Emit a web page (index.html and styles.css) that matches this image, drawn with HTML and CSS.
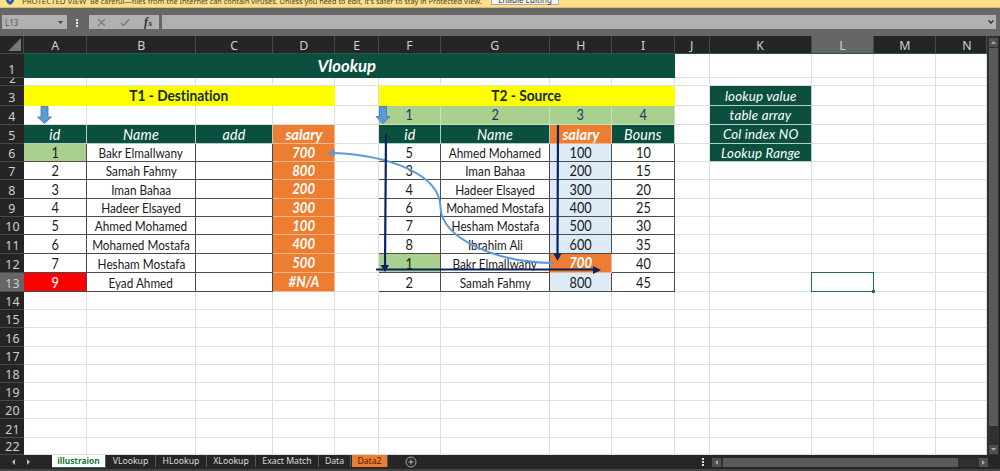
FILE: index.html
```html
<!DOCTYPE html>
<html lang="en">
<head>
<meta charset="utf-8">
<title>Vlookup</title>
<link rel="stylesheet" href="styles.css">
</head>
<body>
<div class="app">
  <div class="notice">
    <svg class="shield" width="10" height="12" viewBox="0 0 10 12"><path d="M5 0L9.5 1.5V6Q9 10 5 12Q1 10 .5 6V1.5Z" fill="#2f6092"/><path d="M5 4V8" stroke="#fff" stroke-width="1.2"/></svg>
    <span class="notice-title">PROTECTED VIEW</span>
    <span class="notice-text">Be careful—files from the Internet can contain viruses. Unless you need to edit, it's safer to stay in Protected View.</span>
    <span class="enable">Enable Editing</span>
    <span class="close">×</span>
  </div>
  <div class="formula">
    <div class="namebox"><span>L13</span><svg width="5" height="3"><path d="M0 0H5L2.5 3Z" fill="#444"/></svg></div>
    <svg class="grip" width="3" height="9"><path d="M0 0h2v2H0zM0 3h2v2H0zM0 6h2v2H0z" fill="#eee"/></svg>
    <div class="fx">
      <svg width="9" height="9" viewBox="0 0 9 9"><path d="M1 1L8 8M8 1L1 8" stroke="#7c7c7c" stroke-width="1.2"/></svg>
      <svg width="10" height="9" viewBox="0 0 10 9"><path d="M1 5L3.5 7.5L9 1.5" fill="none" stroke="#7c7c7c" stroke-width="1.5"/></svg>
      <span>f<small>x</small></span>
    </div>
    <div class="input"><svg width="6" height="4"><path d="M.5 .5L3 3L5.5 .5" fill="none" stroke="#333" stroke-width="1.5"/></svg></div>
  </div>
  <div class="main">
    <div class="sheet" id="sheet">
      <svg class="arrows" width="963" height="401" viewBox="24 54 963 401">
        <g fill="#5b9bd5" stroke="#3f72a8" stroke-width=".8">
          <path d="M41 106.5H48V117H51.5L44.5 123.5L37.5 117H41Z"/>
          <path d="M379.500 106.500H386.500V116.500H390L383 123.500L376 116.500H379.500Z"/>
        </g>
        <path d="M333 153C388 155 440 174 440.500 207C441 240 500 263 554 263" fill="none" stroke="#5b9bd5" stroke-width="2"/>
        <path d="M327 152.500L335 149.500V156Z" fill="#5b9bd5"/>
        <g stroke="#0b2265" stroke-width="2.200" fill="none">
          <path d="M386 134L385 267"/><path d="M558 125L557.500 256"/><path d="M376 269.500H595"/>
        </g>
        <path d="M380.500 265H389L385 272ZM553.500 253.500H561.500L557.500 261ZM593 266L601 270L593 274Z" fill="#0b2265"/>
      </svg>
    </div>
    <div class="vscroll">
      <div class="sbtn"><svg width="5" height="3"><path d="M0 3H5L2.500 0Z" fill="#aaa"/></svg></div>
      <div class="vthumb"></div>
      <div class="sbtn bottom"><svg width="5" height="3"><path d="M0 0H5L2.500 3Z" fill="#aaa"/></svg></div>
    </div>
  </div>
  <div class="tabs">
    <div class="nav"><svg width="20" height="6"><path d="M4 0V6L1 3ZM16 0V6L19 3Z" fill="#bbb"/></svg></div>
    <div class="tab active">illustraion</div>
    <div class="tab vl">VLookup</div>
    <div class="tab hl">HLookup</div>
    <div class="tab xl">XLookup</div>
    <div class="tab em">Exact Match</div>
    <div class="tab da">Data</div>
    <div class="tab orange-tab">Data2</div>
    <svg class="plus" width="12" height="12" viewBox="0 0 12 12"><circle cx="6" cy="6" r="5" fill="none" stroke="#aaa"/><path d="M3.500 6H8.500M6 3.500V8.500" stroke="#bbb"/></svg>
    <svg class="dots" width="2" height="8"><path d="M0 0h2v2H0zM0 3h2v2H0zM0 6h2v2H0z" fill="#ddd"/></svg>
    <div class="hscroll">
      <div class="hbtn"><svg width="3" height="5"><path d="M3 0V5L0 2.500Z" fill="#aaa"/></svg></div>
      <div class="hthumb"></div>
      <div class="hbtn"><svg width="3" height="5"><path d="M0 0V5L3 2.500Z" fill="#aaa"/></svg></div>
    </div>
  </div>
</div>
<script src="sheet.js"></script>
</body>
</html>
```
FILE: styles.css
```css
* { box-sizing: border-box; }
body { margin: 0; font-family: "Noto Sans", sans-serif; font-variant-ligatures: none; }
.app { width: 1000px; height: 471px; overflow: hidden; background: #262626; display: flex; flex-direction: column; }
.notice { height: 8px; flex: none; background: #ffe08a; border-bottom: 1px solid #d9bd72; display: flex; align-items: flex-end; overflow: hidden; line-height: 12px; color: #4a4330; white-space: nowrap; padding-left: 5px; }
.notice > * { flex: none; }
.shield { margin-bottom: 2px; margin-right: 7px; }
.notice-title { width: 64px; font-size: 7.900px; letter-spacing: -.05px; margin-right: 4px; }
.notice-text { width: 401px; font-size: 7.350px; }
.enable { background: #f4f4f4; border: 1px solid #aaa; width: 68px; text-align: center; height: 14px; line-height: 15px; font-size: 8px; margin-bottom: 2px; display: flex; align-items: flex-end; justify-content: center; line-height: 9px; }
.close { margin-left: auto; margin-right: 5px; font-size: 9px; margin-bottom: 3px; }
.formula { height: 28px; flex: none; background: #666; display: flex; align-items: flex-start; padding: 7px 4px 0 2px; }
.namebox, .fx, .input { height: 14px; background: #b1b1b1; display: flex; align-items: center; }
.namebox { width: 65px; justify-content: space-between; padding: 0 4px 0 3px; font-size: 8px; color: #555; }
.grip { margin: 4px 10px 0 9px; }
.fx { width: 70px; padding-left: 8px; gap: 14px; margin-right: 3px; color: #333; font: italic bold 12px "Liberation Serif", serif; }
.fx small { font-size: 9px; }
.input { flex: 1; justify-content: flex-end; padding-right: 2px; }
.main { height: 419px; flex: none; display: flex; }
.sheet { width: 987px; height: 419px; display: grid; position: relative; background: #fff;
  grid-template-columns: 24px 63px 109px 77px 62px 44px 62px 109px 62px 63px 35px 102px 62px 62px 51px;
  grid-template-rows: 18px 24px 8px 20px 19px 19px 18px 18px 19px 18px 18px 19px 19px 19px 18px 18px 19px 18px 18px 18px 18px 19px 17px; }
.cell { border-right: 1px solid #dedede; border-bottom: 1px solid #dedede; display: flex; align-items: center; justify-content: center; min-width: 0; min-height: 0; overflow: hidden; white-space: nowrap; line-height: 18px; color: #1a1a1a; font-family: Lato, sans-serif; font-size: 14.500px; }
.cell span { flex: none; transform: scaleX(.88); }
.cell.head { background: #252525; color: #d0d0d0; border-right-color: #484848; border-bottom-color: #484848; font-family: "Noto Sans", sans-serif; font-size: 13px; }
.head span { transform: scaleX(.95); }
.cell.rowhead { border-right: 0; align-items: flex-end; line-height: 16px; }
.cell.colhead { border-bottom-color: #1d5b46; }
.cell.edge { padding-left: 11px; }
.cell.selected { background: #666; }
.cell.small { line-height: 13px; font-size: 12px; }
.cell.corner { justify-content: flex-end; align-items: flex-end; padding: 0 2px 2px 0; }
.cell.title { background: #0b4f3f; color: #fff; font-style: italic; font-weight: bold; font-size: 17.500px; border-color: #0b4f3f; padding-right: 4px; }
.title span { transform: scaleX(.95); }
.cell.yellow { background: #ff0; color: #122c35; font-weight: bold; font-size: 14.600px; border-color: #ff0; }
.yellow span { transform: scaleX(.94); }
.cell.green { background: #a9d08e; border-color: #c7e2b4; color: #203864; }
.cell.th { background: #0b4f3f; color: #fff; font-style: italic; border-color: #b8ccc6; font-size: 15px; letter-spacing: .2px; }
.th span { transform: scaleX(.95); }
.cell.data { border-color: #4c4c4c; padding-top: 1px; }
.cell.name { font-size: 13px; }
.name span { transform: scaleX(.905); }
.cell.match { background: #a9d08e; }
.cell.red { background: #f00; color: #fff; }
.cell.orange { background: #ed7d31; color: #fff; font-weight: bold; font-style: italic; border-color: #f4b68d; }
.orange span { transform: scaleX(.91); }
.cell.salary-head { font-size: 15px; }
.salary-head span { transform: scaleX(.98); }
.cell.blue { background: #ddebf7; }
.cell.key { font-size: 14px; letter-spacing: .2px; }
.cell.current { box-shadow: inset 0 0 0 1px #217346; border: 0; margin: -1px 0 0 -1px; overflow: visible; position: relative; }
.cell.current::after { content: ""; position: absolute; right: -1px; bottom: -1px; width: 3px; height: 3px; background: #217346; }
.arrows { position: absolute; left: 24px; top: 18px; }
.vscroll { width: 13px; background: #303030; padding: 2px 2px 1px 3px; display: flex; flex-direction: column; align-items: center; border-right: 1px solid #202020; }
.sbtn { width: 9px; height: 9px; background: #505050; display: flex; align-items: center; justify-content: center; }
.vthumb { width: 9px; height: 378px; margin-top: 1px; background: #5a5a5a; }
.bottom { margin-top: auto; }
.tabs { height: 16px; flex: none; background: #262626; border-bottom: 2px solid #444; display: flex; align-items: center; color: #ddd; font-size: 8.700px; line-height: 12px; }
.nav { width: 52px; padding-left: 11px; display: flex; }
.tab { height: 12px; text-align: center; border-right: 1px solid #555; white-space: nowrap; align-self: flex-start; }
.tab.active { width: 54px; height: 13px; background: #fff; color: #217346; font-weight: bold; font-size: 8.400px; border-bottom: 1px solid #217346; }
.vl { width: 50px; } .hl { width: 51px; } .xl { width: 49px; } .em { width: 63px; } .da { width: 32px; }
.orange-tab { width: 36px; margin-left: 1px; background: #ed7d31; color: #512000; }
.plus { margin-left: 17px; }
.dots { margin-left: auto; margin-right: 8px; }
.hscroll { width: 276px; height: 9px; margin-right: 12px; display: flex; background: #303030; justify-content: space-between; }
.hbtn { width: 9px; background: #505050; display: flex; align-items: center; justify-content: center; }
.hthumb { width: 235px; background: #5a5a5a; margin-right: 20px; }
```
FILE: sheet.js
```js
const sheet = document.getElementById('sheet');
const arrows = sheet.querySelector('.arrows');
const cells = {};
const put = (col, row, text, cls, span = 1) => {
  cells[col + ',' + row] = { text, cls, span };
};

put(1, 1, 'Vlookup', 'title', 9);
put(1, 3, 'T1 - Destination', 'yellow', 4);
put(6, 3, 'T2 - Source', 'yellow', 4);
[1, 2, 3, 4].forEach((n, i) => put(6 + i, 4, n, 'green'));
['id', 'Name', 'add', 'salary'].forEach((t, i) => put(1 + i, 5, t, i === 3 ? 'orange salary-head' : 'th'));
['id', 'Name', 'salary', 'Bouns'].forEach((t, i) => put(6 + i, 5, t, i === 2 ? 'orange salary-head' : 'th'));

[[1, 'Bakr Elmallwany', 700], [2, 'Samah Fahmy', 800], [3, 'Iman Bahaa', 200], [4, 'Hadeer Elsayed', 300],
 [5, 'Ahmed Mohamed', 100], [6, 'Mohamed Mostafa', 400], [7, 'Hesham Mostafa', 500], [9, 'Eyad Ahmed', '#N/A']]
  .forEach(([id, name, salary], i) => {
    put(1, 6 + i, id, 'data' + (id === 1 ? ' match' : id === 9 ? ' red' : ''));
    put(2, 6 + i, name, 'data name');
    put(3, 6 + i, '', 'data');
    put(4, 6 + i, salary, 'orange');
  });

[[5, 'Ahmed Mohamed', 100, 10], [3, 'Iman Bahaa', 200, 15], [4, 'Hadeer Elsayed', 300, 20], [6, 'Mohamed Mostafa', 400, 25],
 [7, 'Hesham Mostafa', 500, 30], [8, 'Ibrahim Ali', 600, 35], [1, 'Bakr Elmallwany', 700, 40], [2, 'Samah Fahmy', 800, 45]]
  .forEach(([id, name, salary, bonus], i) => {
    put(6, 6 + i, id, 'data' + (id === 1 ? ' match' : ''));
    put(7, 6 + i, name, 'data name');
    put(8, 6 + i, salary, id === 1 ? 'orange' : 'data blue');
    put(9, 6 + i, bonus, 'data');
  });

['lookup value', 'table array', 'Col index NO', 'Lookup Range'].forEach((t, i) => put(11, 3 + i, t, 'th key'));
put(12, 13, '', 'current');

const add = (col, row, text, cls, span = 1) => {
  const el = document.createElement('div');
  el.className = 'cell ' + cls;
  if (text !== '') {
    const label = document.createElement('span');
    label.textContent = text;
    el.append(label);
  }
  el.style.gridArea = `${row + 1} / ${col + 1} / auto / span ${span}`;
  sheet.insertBefore(el, arrows);
  return el;
};

add(0, 0, '', 'head corner').innerHTML = '<svg width="13" height="13"><path d="M13 0V13H0Z" fill="#777"/></svg>';
[...'ABCDEFGHIJKLMN'].forEach((c, i) => add(i + 1, 0, c, 'head colhead' + (c === 'L' ? ' selected' : c === 'N' ? ' edge' : '')));
for (let row = 1; row <= 22; row++) {
  add(0, row, row, 'head rowhead' + (row === 13 ? ' selected' : '') + (row === 2 ? ' small' : ''));
  for (let col = 1; col <= 14;) {
    const c = cells[col + ',' + row] || { text: '', cls: '', span: 1 };
    add(col, row, c.text, c.cls, c.span);
    col += c.span;
  }
}
```
